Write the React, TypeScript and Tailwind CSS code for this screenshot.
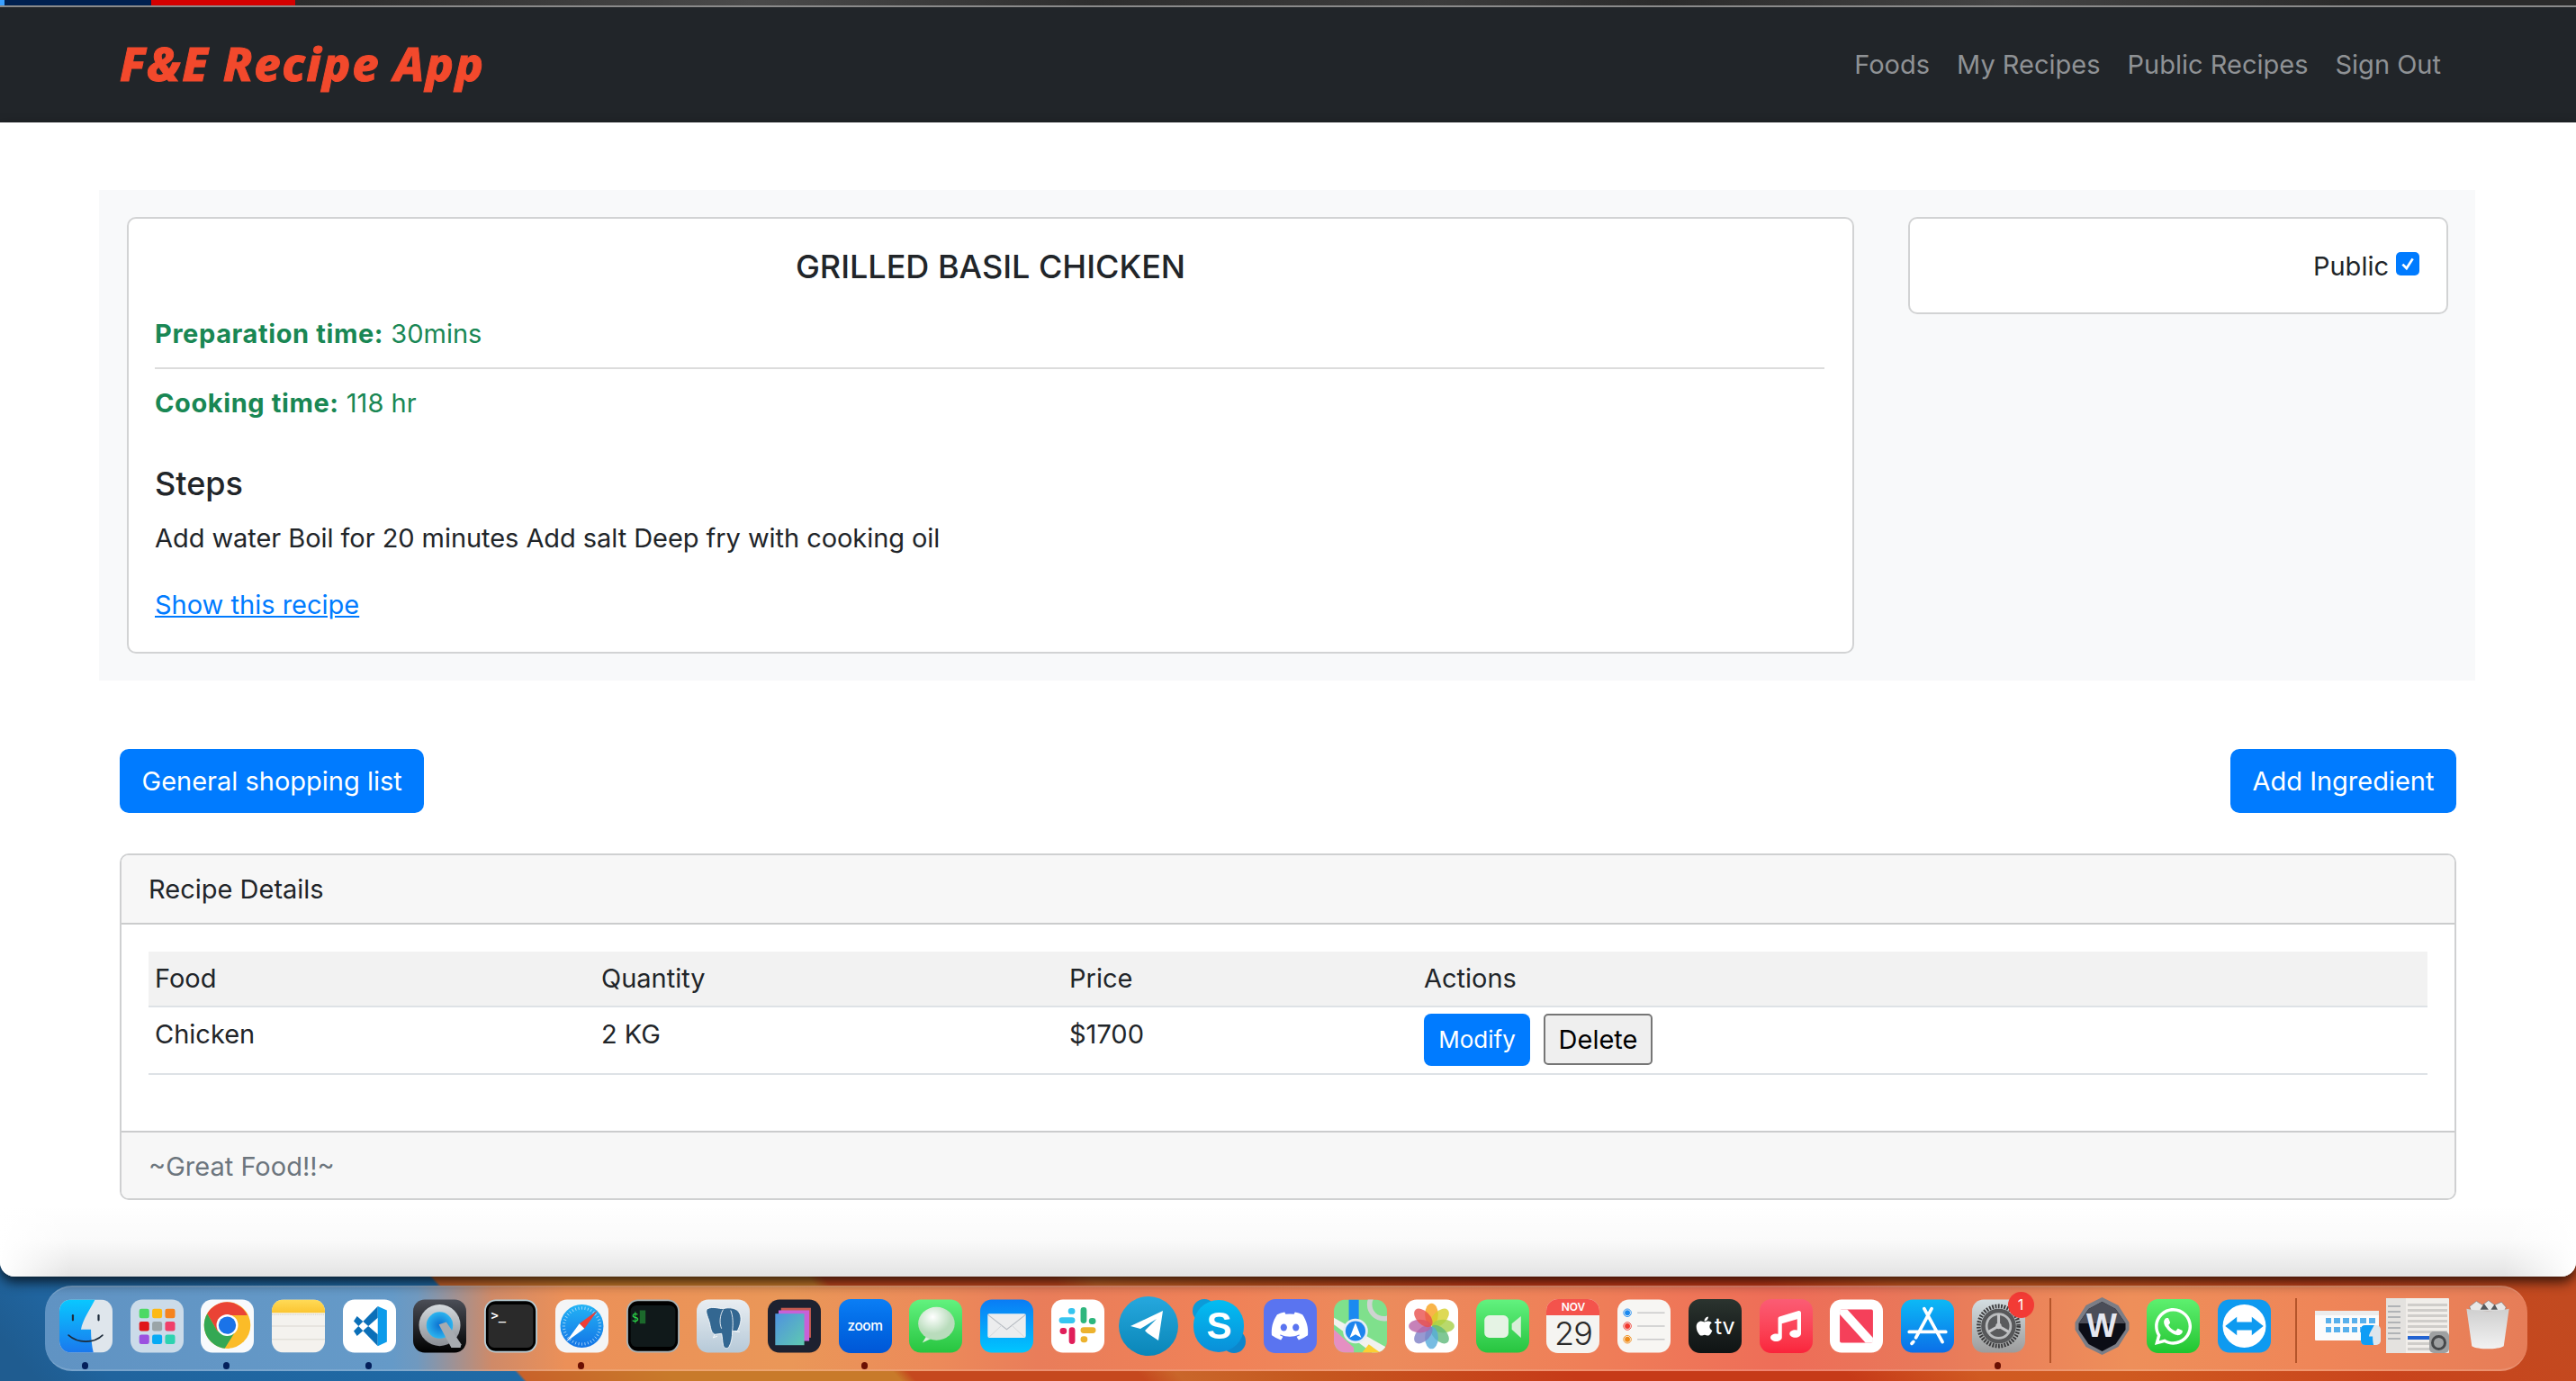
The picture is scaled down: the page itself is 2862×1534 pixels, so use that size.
import { FaApple, FaDiscord, FaMusic, FaWhatsapp } from "react-icons/fa";

const SYS = "font-['Inter','Noto_Sans',sans-serif]";

// ----- dock icons: all drawn on a 64x64 grid -----
function Svg({ children, className = "w-[59px] h-[60px]" }: { children: React.ReactNode; className?: string }) {
  return (
    <svg viewBox="0 0 64 64" className={className}>
      {children}
    </svg>
  );
}

function Finder() {
  return (
    <Svg>
      <defs>
        <linearGradient id="fb" x1="0" y1="0" x2="0" y2="1">
          <stop offset="0" stopColor="#09c8ff" />
          <stop offset="1" stopColor="#1a78ee" />
        </linearGradient>
        <clipPath id="fc">
          <rect width="64" height="64" rx="14" />
        </clipPath>
      </defs>
      <g clipPath="url(#fc)">
        <rect width="64" height="64" fill="#dfe6ec" />
        <path d="M0 0H43C38 10 28 24 26 36H38C38 46 39 56 41 64H0Z" fill="url(#fb)" />
      </g>
      <rect x="15" y="18" width="2.4" height="8" rx="1.2" fill="#1d2b3a" />
      <rect x="46" y="18" width="2.4" height="8" rx="1.2" fill="#1d2b3a" />
      <path d="M11 43C22 53 42 53 52 43" fill="none" stroke="#1d2b3a" strokeWidth="1.8" strokeLinecap="round" />
    </Svg>
  );
}

function Launchpad() {
  const colors = ["#4cd964", "#fdb913", "#f5841f", "#e0161a", "#9aa5a8", "#f0406a", "#9b51e0", "#06aaf5", "#2ed3b0"];
  return (
    <Svg>
      <rect width="64" height="64" rx="14" fill="#cbdbe9" />
      {colors.map((c, i) => (
        <rect key={c} x={10.5 + (i % 3) * 15.6} y={11 + Math.floor(i / 3) * 15.6} width="12" height="11.5" rx="2.5" fill={c} />
      ))}
    </Svg>
  );
}

function Chrome() {
  return (
    <Svg>
      <rect width="64" height="64" rx="14" fill="#f8fafc" />
      <circle cx="32" cy="31" r="28" fill="#fbbc28" />
      <path d="M32 3A28 28 0 0 0 7.8 17L20 38 32 19H56.2A28 28 0 0 0 32 3Z" fill="#ea4335" />
      <path d="M7.8 17A28 28 0 0 0 29 58.8L42 38 20 38Z" fill="#34a853" />
      <circle cx="32" cy="31" r="13" fill="#fff" />
      <circle cx="32" cy="31" r="10.5" fill="#1a73e8" />
    </Svg>
  );
}

function Notes() {
  return (
    <Svg>
      <defs>
        <linearGradient id="ny" x1="0" y1="0" x2="0" y2="1">
          <stop offset="0" stopColor="#ffdb58" />
          <stop offset="1" stopColor="#fbc531" />
        </linearGradient>
        <clipPath id="nc">
          <rect width="64" height="64" rx="14" />
        </clipPath>
      </defs>
      <g clipPath="url(#nc)">
        <rect width="64" height="64" fill="#f4f2ee" />
        <rect width="64" height="16" fill="url(#ny)" />
        <path d="M0 18H64" stroke="#b9b5ad" strokeWidth="0.8" strokeDasharray="1 1" />
        <path d="M0 32H64M0 48H64" stroke="#e2e0da" strokeWidth="1.4" />
      </g>
    </Svg>
  );
}

function VsCode() {
  return (
    <Svg>
      <rect width="64" height="64" rx="14" fill="#fff" />
      <path d="M42 8L13 38 17 44 42 22ZM42 56L13 26 17 20 42 42Z" fill="#0b6fb8" />
      <path d="M42 8L53 13V51L42 56Z" fill="#0c9bea" />
    </Svg>
  );
}

function QuickTime() {
  return (
    <Svg>
      <defs>
        <linearGradient id="qb" x1="0" y1="0" x2="0" y2="1">
          <stop offset="0" stopColor="#4b4e57" />
          <stop offset="1" stopColor="#000" />
        </linearGradient>
        <linearGradient id="qs" x1="0" y1="0" x2="0" y2="1">
          <stop offset="0" stopColor="#d5dade" />
          <stop offset="1" stopColor="#8a8e94" />
        </linearGradient>
        <radialGradient id="qi">
          <stop offset="0" stopColor="#0b6fd0" />
          <stop offset="1" stopColor="#2cb4ef" />
        </radialGradient>
      </defs>
      <rect width="64" height="64" rx="14" fill="url(#qb)" />
      <circle cx="32" cy="31" r="25" fill="url(#qs)" />
      <circle cx="32" cy="31" r="16" fill="url(#qi)" />
      <path d="M31 30L40 27 58 54 57 58 46 58Z" fill="#a7abb0" />
    </Svg>
  );
}

function Terminal() {
  return (
    <Svg>
      <rect x="1" y="1" width="62" height="62" rx="13" fill="#000" stroke="#b7cbd3" strokeWidth="2" />
      <rect x="5" y="6" width="54" height="52" rx="7" fill="#2a2a2a" />
      <text x="8" y="24" fontFamily="DejaVu Sans Mono, monospace" fontSize="15" fontWeight="700" fill="#fff">
        &gt;_
      </text>
    </Svg>
  );
}

function Safari() {
  const ticks = Array.from({ length: 36 }, (_, i) => i * 10);
  return (
    <Svg>
      <defs>
        <linearGradient id="sb" x1="0" y1="0" x2="0" y2="1">
          <stop offset="0" stopColor="#23b3f5" />
          <stop offset="1" stopColor="#1374e6" />
        </linearGradient>
      </defs>
      <rect width="64" height="64" rx="14" fill="#f4f5f6" />
      <circle cx="32" cy="32" r="26" fill="url(#sb)" />
      {ticks.map((t) => (
        <path key={t} d="M32 8.5V12" transform={`rotate(${t} 32 32)`} stroke="#d5edfb" strokeWidth="0.7" />
      ))}
      <path d="M51 13L35 35 29 29Z" fill="#ef3e36" />
      <path d="M13 51L29 29 35 35Z" fill="#fff" />
    </Svg>
  );
}

function ITerm() {
  return (
    <Svg>
      <rect x="1" y="1" width="62" height="62" rx="13" fill="#000" stroke="#a9b2b5" strokeWidth="2" />
      <rect x="5" y="7" width="54" height="50" rx="7" fill="#10191a" />
      <text x="6" y="27" fontFamily="DejaVu Sans Mono, monospace" fontSize="15" fill="#2ee04c">
        $
      </text>
      <rect x="16" y="13" width="7" height="16" fill="#1c6a2c" />
    </Svg>
  );
}

function Postgres() {
  return (
    <Svg>
      <defs>
        <linearGradient id="pg" x1="0" y1="0" x2="0" y2="1">
          <stop offset="0" stopColor="#e9eef2" />
          <stop offset="1" stopColor="#b6c9d8" />
        </linearGradient>
      </defs>
      <rect width="64" height="64" rx="14" fill="url(#pg)" />
      <path
        d="M13 11C20 8 26 11 32 11 39 9 49 10 52 17 55 24 52 32 49 38L43 38C43 45 42 52 39 57 37 60 33 59 32 55 31 50 31 45 30 41L22 42C18 41 17 35 16 30 15 23 9 14 13 11Z"
        fill="#336791"
        stroke="#fff"
        strokeWidth="0.9"
      />
      <path d="M32 12C28 19 27 28 30 35M41 13C44 20 44 30 43 38M22 42L20 46 25 44M46 38L52 39" fill="none" stroke="#fff" strokeWidth="0.9" />
    </Svg>
  );
}

function Pages() {
  return (
    <Svg>
      <rect width="64" height="64" rx="14" fill="#1d2130" />
      <rect x="16" y="10" width="36" height="36" fill="#c65a50" />
      <rect x="13" y="13" width="37" height="37" fill="#c761d8" />
      <defs>
        <linearGradient id="pa" x1="0" y1="0" x2="1" y2="1">
          <stop offset="0" stopColor="#4f92e0" />
          <stop offset="1" stopColor="#5fc9b0" />
        </linearGradient>
      </defs>
      <rect x="9" y="17" width="35" height="38" fill="url(#pa)" />
    </Svg>
  );
}

function Zoom() {
  return (
    <div className="w-[59px] h-[60px] rounded-[13px] bg-gradient-to-b from-[#0b7ef5] to-[#0056d6] flex items-center justify-center">
      <span className="font-['Inter',sans-serif] text-white text-[15.5px] font-medium tracking-tight">zoom</span>
    </div>
  );
}

function Messages() {
  return (
    <Svg>
      <defs>
        <linearGradient id="mg" x1="0" y1="0" x2="0" y2="1">
          <stop offset="0" stopColor="#62f27f" />
          <stop offset="1" stopColor="#27c43f" />
        </linearGradient>
        <radialGradient id="mw" cx="0.4" cy="0.3">
          <stop offset="0" stopColor="#fff" />
          <stop offset="1" stopColor="#b9dcbc" />
        </radialGradient>
      </defs>
      <rect width="64" height="64" rx="14" fill="url(#mg)" />
      <path d="M16 52L21 44 27 47Z" fill="#dcefdc" />
      <ellipse cx="33" cy="29" rx="22" ry="20" fill="url(#mw)" />
    </Svg>
  );
}

function Mail() {
  return (
    <Svg>
      <defs>
        <linearGradient id="ml" x1="0" y1="0" x2="0" y2="1">
          <stop offset="0" stopColor="#0a7cf5" />
          <stop offset="1" stopColor="#00c6ff" />
        </linearGradient>
      </defs>
      <rect width="64" height="64" rx="14" fill="url(#ml)" />
      <rect x="9" y="17" width="46" height="29" rx="2" fill="#ecedee" />
      <path d="M9 18L32 36 55 18" fill="none" stroke="#b7bcc2" strokeWidth="1.2" />
      <path d="M10 46L26 31M54 46L38 31" fill="none" stroke="#cfd2d6" strokeWidth="0.9" />
    </Svg>
  );
}

function Slack() {
  return (
    <Svg>
      <rect width="64" height="64" rx="14" fill="#fff" />
      <g strokeWidth="7.4" strokeLinecap="round" fill="none">
        <path d="M25 14H24M25 25H13" stroke="#36c5f0" />
        <path d="M39 13V25M50 26H49" stroke="#2eb67d" />
        <path d="M39 37H50M39 48H40" stroke="#ecb22e" />
        <path d="M25 37V50M14 38H15" stroke="#e01e5a" />
      </g>
    </Svg>
  );
}

function Telegram() {
  return (
    <div className="w-[59px] h-[60px] flex justify-center">
      <svg viewBox="0 0 66 66" className="w-[66px] h-[66px] -mt-[3px] shrink-0">
        <defs>
          <linearGradient id="tg" x1="0" y1="0" x2="0" y2="1">
            <stop offset="0" stopColor="#26a8de" />
            <stop offset="1" stopColor="#0a86b8" />
          </linearGradient>
        </defs>
        <circle cx="33" cy="33" r="33" fill="url(#tg)" />
        <path d="M13 33L49 16 44 49 32 41 29 38 42 25 24 36Z" fill="#fff" />
      </svg>
    </div>
  );
}

function Skype() {
  return (
    <div className="relative w-[59px] h-[60px] flex items-center justify-center">
      <span className="absolute left-0 top-0 w-[26px] h-[26px] rounded-full bg-[#0c9ad8]" />
      <span className="absolute right-0 bottom-0 w-[26px] h-[26px] rounded-full bg-[#0c86cc]" />
      <span className="absolute left-[1px] top-[1px] w-[56px] h-[58px] rounded-full bg-gradient-to-b from-[#03bdf2] to-[#0a8fd8]" />
      <span className="relative font-['Liberation_Sans',sans-serif] font-bold text-white text-[42px] leading-none">S</span>
    </div>
  );
}

function Discord() {
  return (
    <div className="w-[59px] h-[60px] rounded-[13px] bg-[#5a74f0] flex items-center justify-center">
      <FaDiscord className="text-white w-[44px] h-[44px]" />
    </div>
  );
}

function Maps() {
  return (
    <Svg>
      <defs>
        <clipPath id="mc">
          <rect width="64" height="64" rx="14" />
        </clipPath>
      </defs>
      <g clipPath="url(#mc)">
        <rect width="64" height="64" fill="#7fe08c" />
        <path d="M0 36L24 58 24 64H0Z" fill="#e58fc2" />
        <path d="M0 22L64 58V64H46L0 30Z" fill="#f2f2ee" />
        <path d="M34 64L42 54 56 64Z" fill="#fbcf33" />
        <rect x="18" y="0" width="12" height="34" fill="#1a8af0" />
        <circle cx="60" cy="6" r="17" fill="none" stroke="#cfd3d2" strokeWidth="6" />
        <circle cx="26" cy="38" r="15" fill="#e6edf5" />
        <circle cx="26" cy="38" r="12" fill="#1d84ee" />
        <path d="M26 28L33 46 26 42 19 46Z" fill="#fff" />
      </g>
    </Svg>
  );
}

function Photos() {
  const petals = ["#f7a11b", "#d6cf2a", "#a6cf47", "#5fb97a", "#55abdb", "#7d80c6", "#b863a8", "#e9504c"];
  return (
    <Svg>
      <rect width="64" height="64" rx="14" fill="#fff" />
      {petals.map((c, i) => (
        <ellipse key={c} cx="32" cy="18" rx="8" ry="13.5" fill={c} opacity="0.8" transform={`rotate(${i * 45} 32 32)`} />
      ))}
    </Svg>
  );
}

function FaceTime() {
  return (
    <Svg>
      <defs>
        <linearGradient id="ftg" x1="0" y1="0" x2="0" y2="1">
          <stop offset="0" stopColor="#62f27f" />
          <stop offset="1" stopColor="#27c43f" />
        </linearGradient>
      </defs>
      <rect width="64" height="64" rx="14" fill="url(#ftg)" />
      <rect x="10" y="19" width="29" height="27" rx="6" fill="#e5f3e4" />
      <path d="M43 29L54 20V46L43 36Z" fill="#d8eed8" />
    </Svg>
  );
}

function Calendar() {
  return (
    <div className="w-[59px] h-[60px] rounded-[13px] overflow-hidden bg-[#f5f4f1] flex flex-col items-center font-['Inter',sans-serif]">
      <div className="w-full h-[18px] bg-[#f4534c] text-white text-[12px] font-semibold leading-[18px] text-center">NOV</div>
      <div className="text-[#2a2a2a] text-[36px] font-light leading-[41px] tracking-tight">29</div>
    </div>
  );
}

function Reminders() {
  const dots = ["#1b8af0", "#f0382f", "#f08a16"];
  return (
    <Svg>
      <rect width="64" height="64" rx="14" fill="#f7f6f3" />
      {dots.map((c, i) => (
        <g key={c}>
          <circle cx="12" cy={16 + i * 16} r="4.6" fill="none" stroke={c} strokeWidth="1" />
          <circle cx="12" cy={16 + i * 16} r="3.2" fill={c} />
          <path d={`M24 ${16 + i * 16}H57`} stroke="#c9c9c9" strokeWidth="1.6" />
        </g>
      ))}
    </Svg>
  );
}

function AppleTv() {
  return (
    <div className="w-[59px] h-[60px] rounded-[13px] bg-gradient-to-b from-[#2b342f] to-[#0f1314] flex items-center justify-center gap-[1px]">
      <FaApple className="text-white w-[21px] h-[24px]" />
      <span className="font-['Inter',sans-serif] text-white text-[25px] font-normal leading-none">tv</span>
    </div>
  );
}

function Music() {
  return (
    <div className="w-[59px] h-[60px] rounded-[13px] bg-gradient-to-b from-[#fb5c74] to-[#fa233b] flex items-center justify-center">
      <FaMusic className="text-white w-[34px] h-[36px]" />
    </div>
  );
}

function News() {
  return (
    <Svg>
      <rect width="64" height="64" rx="14" fill="#fff" />
      <rect x="12" y="12" width="40" height="40" rx="2" fill="#f5405a" />
      <path d="M12 12H21L52 46V52H43L12 18Z" fill="#fff" />
    </Svg>
  );
}

function AppStore() {
  return (
    <Svg>
      <defs>
        <linearGradient id="as" x1="0" y1="0" x2="0" y2="1">
          <stop offset="0" stopColor="#0cb9f6" />
          <stop offset="1" stopColor="#0b6fe8" />
        </linearGradient>
      </defs>
      <rect width="64" height="64" rx="14" fill="url(#as)" />
      <g stroke="#fff" strokeWidth="4" strokeLinecap="round" fill="none">
        <path d="M28 11L50 51M37 11L18 46M10 39H54" />
        <path d="M15 51L13 53" />
      </g>
    </Svg>
  );
}

function Settings() {
  return (
    <div className="relative w-[59px] h-[60px]">
      <Svg>
        <defs>
          <linearGradient id="sg" x1="0" y1="0" x2="0" y2="1">
            <stop offset="0" stopColor="#d3dde1" />
            <stop offset="1" stopColor="#9c9c9c" />
          </linearGradient>
        </defs>
        <rect width="64" height="64" rx="14" fill="url(#sg)" />
        <circle cx="32" cy="32" r="24" fill="none" stroke="#3a3a3c" strokeWidth="5" strokeDasharray="2 1.6" />
        <circle cx="32" cy="32" r="21" fill="#57585a" />
        <circle cx="32" cy="32" r="16" fill="#b9bbbd" />
        <circle cx="32" cy="32" r="13" fill="#5a5b5d" />
        <path d="M32 32V18M32 32L20 39M32 32L44 39" stroke="#c4c5c7" strokeWidth="3.4" />
        <circle cx="32" cy="32" r="3.5" fill="#c4c5c7" />
      </Svg>
      <span className="absolute -top-[8px] -right-[10px] w-[29px] h-[29px] rounded-full bg-[#f23b35] text-white text-[16px] leading-[29px] text-center font-['Inter',sans-serif]">
        1
      </span>
    </div>
  );
}

function Windscribe() {
  return (
    <div className="relative w-[65px] h-[64px] -mx-[3px] -my-[2px] flex items-center justify-center">
      <svg viewBox="0 0 64 64" className="absolute inset-0 w-full h-full">
        <path d="M32 0L50 9 62 28 62 36 50 55 32 64 14 55 2 36 2 28 14 9Z" fill="#7b7d86" />
        <path d="M32 5L47 13 58 29V36L47 52 32 60 17 52 6 36V29L17 13Z" fill="#0b0d16" />
        <path d="M32 5L47 13 58 29H6L17 13Z" fill="#4b4d58" />
      </svg>
      <span className="relative font-['Liberation_Sans',sans-serif] font-bold text-[#e5e7f0] text-[36px] leading-none">W</span>
    </div>
  );
}

function WhatsApp() {
  return (
    <div className="w-[59px] h-[60px] rounded-[13px] bg-gradient-to-b from-[#5df06f] to-[#1ec52e] flex items-center justify-center">
      <FaWhatsapp className="text-white w-[47px] h-[47px]" />
    </div>
  );
}

function TeamViewer() {
  return (
    <Svg>
      <rect width="64" height="64" rx="14" fill="#0e9af0" />
      <circle cx="32" cy="32" r="26" fill="#fff" />
      <path d="M9 32L23 21V27H41V21L55 32 41 43V37H23V43Z" fill="#0e9af0" />
    </Svg>
  );
}

function MiniFinder() {
  return (
    <div className="absolute -right-[2px] -bottom-[10px]">
      <Svg className="w-[22px] h-[32px]">
        <rect width="64" height="64" rx="14" fill="#dfe6ec" />
        <path d="M0 14Q0 0 14 0H43C38 10 28 24 26 36H38C38 46 39 56 41 64H14Q0 64 0 50Z" fill="#0f9df5" />
      </Svg>
    </div>
  );
}

function FinderWindow() {
  const cells = Array.from({ length: 12 }, (_, i) => i);
  return (
    <div className="relative w-[71px] h-[33px] bg-[#fbfbfb] rounded-[1px]">
      <div className="h-[5px] bg-[#ececec]" />
      <div className="ml-[12px] mt-[3px] grid grid-cols-6 gap-x-[3px] gap-y-[4px] w-[55px]">
        {cells.map((c) => (
          <span key={c} className="h-[6px] bg-[#58b0ec]" />
        ))}
      </div>
      <MiniFinder />
    </div>
  );
}

function SettingsWindow() {
  const rows = Array.from({ length: 9 }, (_, i) => i);
  return (
    <div className="relative w-[70px] h-[61px] bg-[#f1eeea] rounded-[1px] flex">
      <div className="w-[22px] bg-[#e4e2df] flex flex-col gap-[4px] pt-[8px] pl-[2px]">
        {rows.slice(0, 7).map((r) => (
          <span key={r} className="h-[2px] w-[14px] bg-[#b0b3b6]" />
        ))}
      </div>
      <div className="flex-1 flex flex-col gap-[3px] pt-[6px] px-[2px]">
        {rows.map((r) => (
          <span key={r} className={r === 6 ? "h-[4px] bg-[#2263d1]" : "h-[3px] bg-[#cfcdca]"} />
        ))}
      </div>
      <div className="absolute right-0 bottom-0 w-[22px] h-[24px] rounded-[5px] bg-[#9ea0a1] flex items-center justify-center">
        <span className="w-[17px] h-[17px] rounded-full border-[3px] border-[#46484a]" />
      </div>
    </div>
  );
}

function Trash() {
  return (
    <Svg className="w-[54px] h-[69px]">
      <defs>
        <linearGradient id="tr" x1="0" y1="0" x2="0" y2="1">
          <stop offset="0" stopColor="#cfcfcf" />
          <stop offset="1" stopColor="#f2f2f2" />
        </linearGradient>
      </defs>
      <path d="M8 8L17 1 25 6 33 0 41 6 50 2 56 9 54 14H10Z" fill="#e8e8e8" stroke="#6f6f73" strokeWidth="0.7" />
      <path d="M27 4L33 12H22ZM41 5L45 12H36Z" fill="#55585c" />
      <path d="M4 11C20 15 44 15 60 11L53 60C45 65 19 65 11 60Z" fill="url(#tr)" />
    </Svg>
  );
}

const APPS: { key: string; node: React.ReactNode; running?: boolean }[] = [
  { key: "finder", node: <Finder />, running: true },
  { key: "launchpad", node: <Launchpad /> },
  { key: "chrome", node: <Chrome />, running: true },
  { key: "notes", node: <Notes /> },
  { key: "vscode", node: <VsCode />, running: true },
  { key: "quicktime", node: <QuickTime /> },
  { key: "terminal", node: <Terminal /> },
  { key: "safari", node: <Safari />, running: true },
  { key: "iterm", node: <ITerm /> },
  { key: "postgres", node: <Postgres /> },
  { key: "pages", node: <Pages /> },
  { key: "zoom", node: <Zoom />, running: true },
  { key: "messages", node: <Messages /> },
  { key: "mail", node: <Mail /> },
  { key: "slack", node: <Slack /> },
  { key: "telegram", node: <Telegram /> },
  { key: "skype", node: <Skype /> },
  { key: "discord", node: <Discord /> },
  { key: "maps", node: <Maps /> },
  { key: "photos", node: <Photos /> },
  { key: "facetime", node: <FaceTime /> },
  { key: "calendar", node: <Calendar /> },
  { key: "reminders", node: <Reminders /> },
  { key: "tv", node: <AppleTv /> },
  { key: "music", node: <Music /> },
  { key: "news", node: <News /> },
  { key: "appstore", node: <AppStore /> },
  { key: "settings", node: <Settings />, running: true },
];

function DockItem({ node, running, dark }: { node: React.ReactNode; running?: boolean; dark?: boolean }) {
  return (
    <div className="relative w-[59px] h-[60px] shrink-0">
      {node}
      {running && (
        <span
          className={
            dark
              ? "absolute left-[25px] top-[70px] w-[7px] h-[8px] rounded-full bg-[#04205c]"
              : "absolute left-[25px] top-[70px] w-[7px] h-[8px] rounded-full bg-[#6b0f02]"
          }
        />
      )}
    </div>
  );
}

function Dock() {
  return (
    <div className="relative ml-[50px] mt-[10px] w-[2758px] h-[95px] rounded-[30px] border-y-2 border-white/15 bg-[linear-gradient(to_right,#6093c3_0,#659ac8_14%,#7099bf_15%,#cf8a68_18%,#ec9058_21%,#ea9758_30%,#ec8a5a_36%,#e97d5a_40%,#f08258_48%,#ec8b5c_54%,#ef7f58_62%,#ee6d58_70%,#e8795a_76%,#ee8f5a_84%,#ef8558_92%,#e67d58_100%)] flex items-start pl-[16px] pt-[13px]">
      <div className="flex gap-[19.7px]">
        {APPS.map((a, i) => (
          <DockItem key={a.key} node={a.node} running={a.running} dark={i < 7} />
        ))}
      </div>
      <span className="ml-[27px] -mt-[1px] w-[2px] h-[72px] bg-[#b5552a]" />
      <div className="ml-[27px] flex gap-[20px]">
        <DockItem node={<Windscribe />} />
        <DockItem node={<WhatsApp />} />
        <DockItem node={<TeamViewer />} />
      </div>
      <span className="ml-[27px] -mt-[1px] w-[2px] h-[72px] bg-[#b5552a]" />
      <div className="ml-[20px] mt-[13px]">
        <FinderWindow />
      </div>
      <div className="ml-[8px] -mt-[1px]">
        <SettingsWindow />
      </div>
      <div className="ml-[16px] -mt-[6px]">
        <Trash />
      </div>
    </div>
  );
}

function TopStrip() {
  return (
    <div className="h-[8px] shrink-0 flex flex-col">
      <div className="h-[6px] flex">
        <div className="w-[5px] bg-[#3aa0ff]" />
        <div className="w-[163px] bg-[#00204f]" />
        <div className="w-[160px] bg-[#d40000]" />
        <div className="flex-1 bg-[linear-gradient(to_right,#2b2b2b_0,#3a3a3a_10%,#4a4a4a_20%,#2e2e2e_35%,#3c3c3c_50%,#2b2b2b_60%,#444_75%,#2b2b2b_90%)]" />
      </div>
      <div className="h-[2px] bg-[#8a8a8a]" />
    </div>
  );
}

function NavBar() {
  const links = ["Foods", "My Recipes", "Public Recipes", "Sign Out"];
  return (
    <nav className="h-[128px] shrink-0 bg-[#212529] flex items-center justify-between pl-[133px] pr-[150px]">
      <a className="font-['Noto_Sans',sans-serif] font-extrabold italic text-[#f2492c] text-[52px] tracking-[1.6px] leading-none -mt-[4px] [-webkit-text-stroke:1px_#f2492c]">
        F&amp;E Recipe App
      </a>
      <ul className="flex gap-[30px] text-[29px] text-[#8f9295] leading-[44px]">
        {links.map((l) => (
          <li key={l}>{l}</li>
        ))}
      </ul>
    </nav>
  );
}

function RecipeCard() {
  return (
    <div className="w-[1919px] h-[485px] shrink-0 border-2 border-[#d2d3d4] rounded-[10px] bg-white pt-[31px] px-[29px]">
      <h1 className="text-center text-[36px] leading-[44px] font-medium">GRILLED BASIL CHICKEN</h1>
      <p className="mt-[31px] text-[#198754]">
        <strong className="font-bold tracking-[0.6px]">Preparation time:</strong> 30mins
      </p>
      <hr className="mt-[15px] mr-[2px] border-t-2 border-[#dcdcdc]" />
      <p className="mt-[16px] text-[#198754]">
        <strong className="font-bold tracking-[0.6px]">Cooking time:</strong> 118 hr
      </p>
      <h2 className="mt-[46px] text-[36px] leading-[42px] font-medium">Steps</h2>
      <p className="mt-[18px] tracking-[-0.06px]">Add water Boil for 20 minutes Add salt Deep fry with cooking oil</p>
      <a className="block mt-[30px] text-[#007bff] underline">Show this recipe</a>
    </div>
  );
}

function PublicCard() {
  return (
    <div className="w-[600px] h-[108px] shrink-0 ml-[60px] border-2 border-[#d2d3d4] rounded-[10px] bg-white flex items-start justify-end pt-[31px] pr-[30px]">
      <label className="flex items-center gap-[8px] h-[44px]">
        Public
        <span className="w-[26px] h-[26px] -mt-[6px] rounded-[5px] bg-[#007bff] flex items-center justify-center">
          <svg viewBox="0 0 16 16" className="w-[20px] h-[20px]">
            <path d="M3.5 8.5L7 12 12.5 3.5" fill="none" stroke="#fff" strokeWidth="2.2" />
          </svg>
        </span>
      </label>
    </div>
  );
}

function DetailsCard() {
  return (
    <div className="mt-[45px] mx-[133px] h-[385px] border-2 border-[#cfd0d1] rounded-[10px] flex flex-col overflow-hidden">
      <div className="h-[77px] shrink-0 bg-[#f7f7f7] border-b-2 border-[#cbcccd] px-[30px] leading-[76px]">Recipe Details</div>
      <div className="flex-1 pt-[30px] px-[30px]">
        <table className="w-full table-fixed border-collapse">
          <thead>
            <tr className="h-[61px] bg-[#f2f2f2] border-b-2 border-[#dee2e6] text-left">
              <th className="w-[496px] pl-[7px] font-normal">Food</th>
              <th className="w-[520px] pl-[7px] font-normal">Quantity</th>
              <th className="w-[394px] pl-[7px] font-normal">Price</th>
              <th className="pl-[7px] font-normal">Actions</th>
            </tr>
          </thead>
          <tbody>
            <tr className="h-[75px] border-b-2 border-[#dee2e6] align-top">
              <td className="pl-[7px] pt-[8px]">Chicken</td>
              <td className="pl-[7px] pt-[8px]">2 KG</td>
              <td className="pl-[7px] pt-[8px]">$1700</td>
              <td className="pl-[7px] pt-[7px]">
                <div className="flex items-start gap-[15px]">
                  <button className="w-[118px] h-[58px] rounded-[8px] bg-[#007bff] text-white text-[26px]">Modify</button>
                  <button className="w-[121px] h-[57px] rounded-[5px] bg-[#efefef] border-2 border-[#767676] text-black text-[29px]">
                    Delete
                  </button>
                </div>
              </td>
            </tr>
          </tbody>
        </table>
      </div>
      <div className="h-[75px] shrink-0 bg-[#f7f7f7] border-t-2 border-[#cbcccd] px-[30px] leading-[75px] text-[#6c757d]">
        ~Great Food!!~
      </div>
    </div>
  );
}

export default function App() {
  return (
    <div
      className={`w-[2862px] h-[1534px] overflow-hidden flex flex-col ${SYS} text-[29px] leading-[44px] text-[#212529] bg-[linear-gradient(48deg,#1f5c90_1%,#20649e_3%,#1f6aa6_13.7%,#c8622a_13.8%,#c87a2a_17.7%,#c87a2a_23.6%,#c5481e_24%,#c5481e_30%,#c9662a_31%,#c5581f_34.3%,#c63a18_41.4%,#c63a18_48.5%,#d05a22_52%,#cf5a20_55.6%,#c9441c_62.7%,#c24a20_69%)]`}
    >
      <TopStrip />
      <NavBar />
      <main className="relative z-10 h-[1282px] shrink-0 bg-white rounded-b-[16px] shadow-[0_6px_14px_rgba(0,0,0,0.75)] overflow-hidden">
        <section className="mt-[75px] ml-[110px] mr-[112px] h-[545px] bg-[#f8f9fa] py-[30px] pl-[31px] flex items-start">
          <RecipeCard />
          <PublicCard />
        </section>
        <div className="mt-[76px] mx-[133px] flex justify-between">
          <button className="h-[71px] px-[24.5px] rounded-[10px] bg-[#007bff] text-white">General shopping list</button>
          <button className="h-[71px] px-[24.5px] rounded-[10px] bg-[#007bff] text-white">Add Ingredient</button>
        </div>
        <DetailsCard />
        <div className="absolute inset-x-0 bottom-0 h-[80px] bg-[linear-gradient(to_right,#fff,transparent_80px),linear-gradient(to_left,#fff,transparent_80px),linear-gradient(to_bottom,transparent,#00000005_50%,#0000001c)]" />
      </main>
      <Dock />
    </div>
  );
}
